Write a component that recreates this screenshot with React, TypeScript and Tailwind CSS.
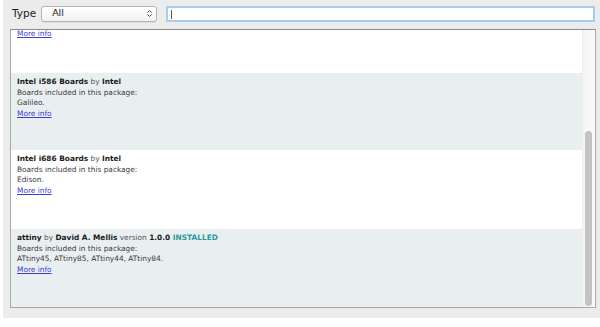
import { ChevronsUpDown } from 'lucide-react';

const font = { fontFamily: '"DejaVu Sans", Verdana, sans-serif' };

function MoreInfo() {
  return <div className="text-[#3b3bd6] underline">More info</div>;
}

function Board({ name, author, version, boards, bg, h }: { name: string; author: string; version?: string; boards: string; bg: string; h: string }) {
  return (
    <div className={`${bg} ${h} pl-[6px] pt-[4px] leading-[10.6px]`}>
      <div>
        <span className="font-bold text-[#1a1a1a]">{name}</span>
        <span className="text-[#555]"> by </span>
        <span className="font-bold text-[#1a1a1a]">{author}</span>
        {version && (
          <>
            <span className="text-[#555]"> version </span>
            <span className="font-bold text-[#1a1a1a]">{version}</span>
            <span className="font-bold text-[#2a9a9c]"> INSTALLED</span>
          </>
        )}
      </div>
      <div className="text-[#3a3a3a]">Boards included in this package:</div>
      <div className="text-[#3a3a3a]">{boards}</div>
      <MoreInfo />
    </div>
  );
}

export default function App() {
  return (
    <div className="w-[600px] h-[327px] bg-white pl-[3px]" style={font}>
      <div className="h-[318px] bg-[#ececec] flex flex-col">
        <div className="flex items-center h-[29px] pb-[2px] pl-[9px] pr-[4px]">
          <span className="text-[10.5px] text-[#222] mr-[5px]">Type</span>
          <div className="w-[116px] h-[16px] rounded-[3px] border border-[#b5b5b5] bg-gradient-to-b from-white to-[#f1f1f1] flex items-center pl-[10px] pr-[2px] text-[9.5px] text-[#222] shadow-[0_1px_0_rgba(0,0,0,0.06)]">
            <span className="flex-1">All</span>
            <ChevronsUpDown className="w-[9px] h-[9px] text-[#444]" strokeWidth={2.5} />
          </div>
          <div className="ml-[9px] w-[429px] h-[16px] border-[2px] border-[#a9cdee] bg-white">
            <div className="ml-[3px] mt-[2px] w-px h-[9px] bg-[#555]" />
          </div>
        </div>
        <div className="ml-[7px] w-[586px] h-[279px] border border-[#a8a8a8] border-t-[#8c8c8c] bg-white flex text-[7.4px]">
          <div className="w-[571px] flex flex-col">
            <div className="h-[43px] pl-[6px] leading-[8px]">
              <MoreInfo />
            </div>
            <Board name="Intel i586 Boards" author="Intel" boards="Galileo." bg="bg-[#e9eff0]" h="h-[77px]" />
            <Board name="Intel i686 Boards" author="Intel" boards="Edison." bg="bg-white" h="h-[79px]" />
            <Board name="attiny" author="David A. Mellis" version="1.0.0" boards="ATtiny45, ATtiny85, ATtiny44, ATtiny84." bg="bg-[#e9eff0]" h="h-[78px]" />
          </div>
          <div className="w-[13px] border-l border-[#ececec] bg-gradient-to-r from-[#f4f4f4] to-[#fbfbfb] pt-[101px] pb-[1px] pl-[2px] pr-[3px]">
            <div className="h-full rounded-full bg-[#c3c3c3]" />
          </div>
        </div>
      </div>
    </div>
  );
}
